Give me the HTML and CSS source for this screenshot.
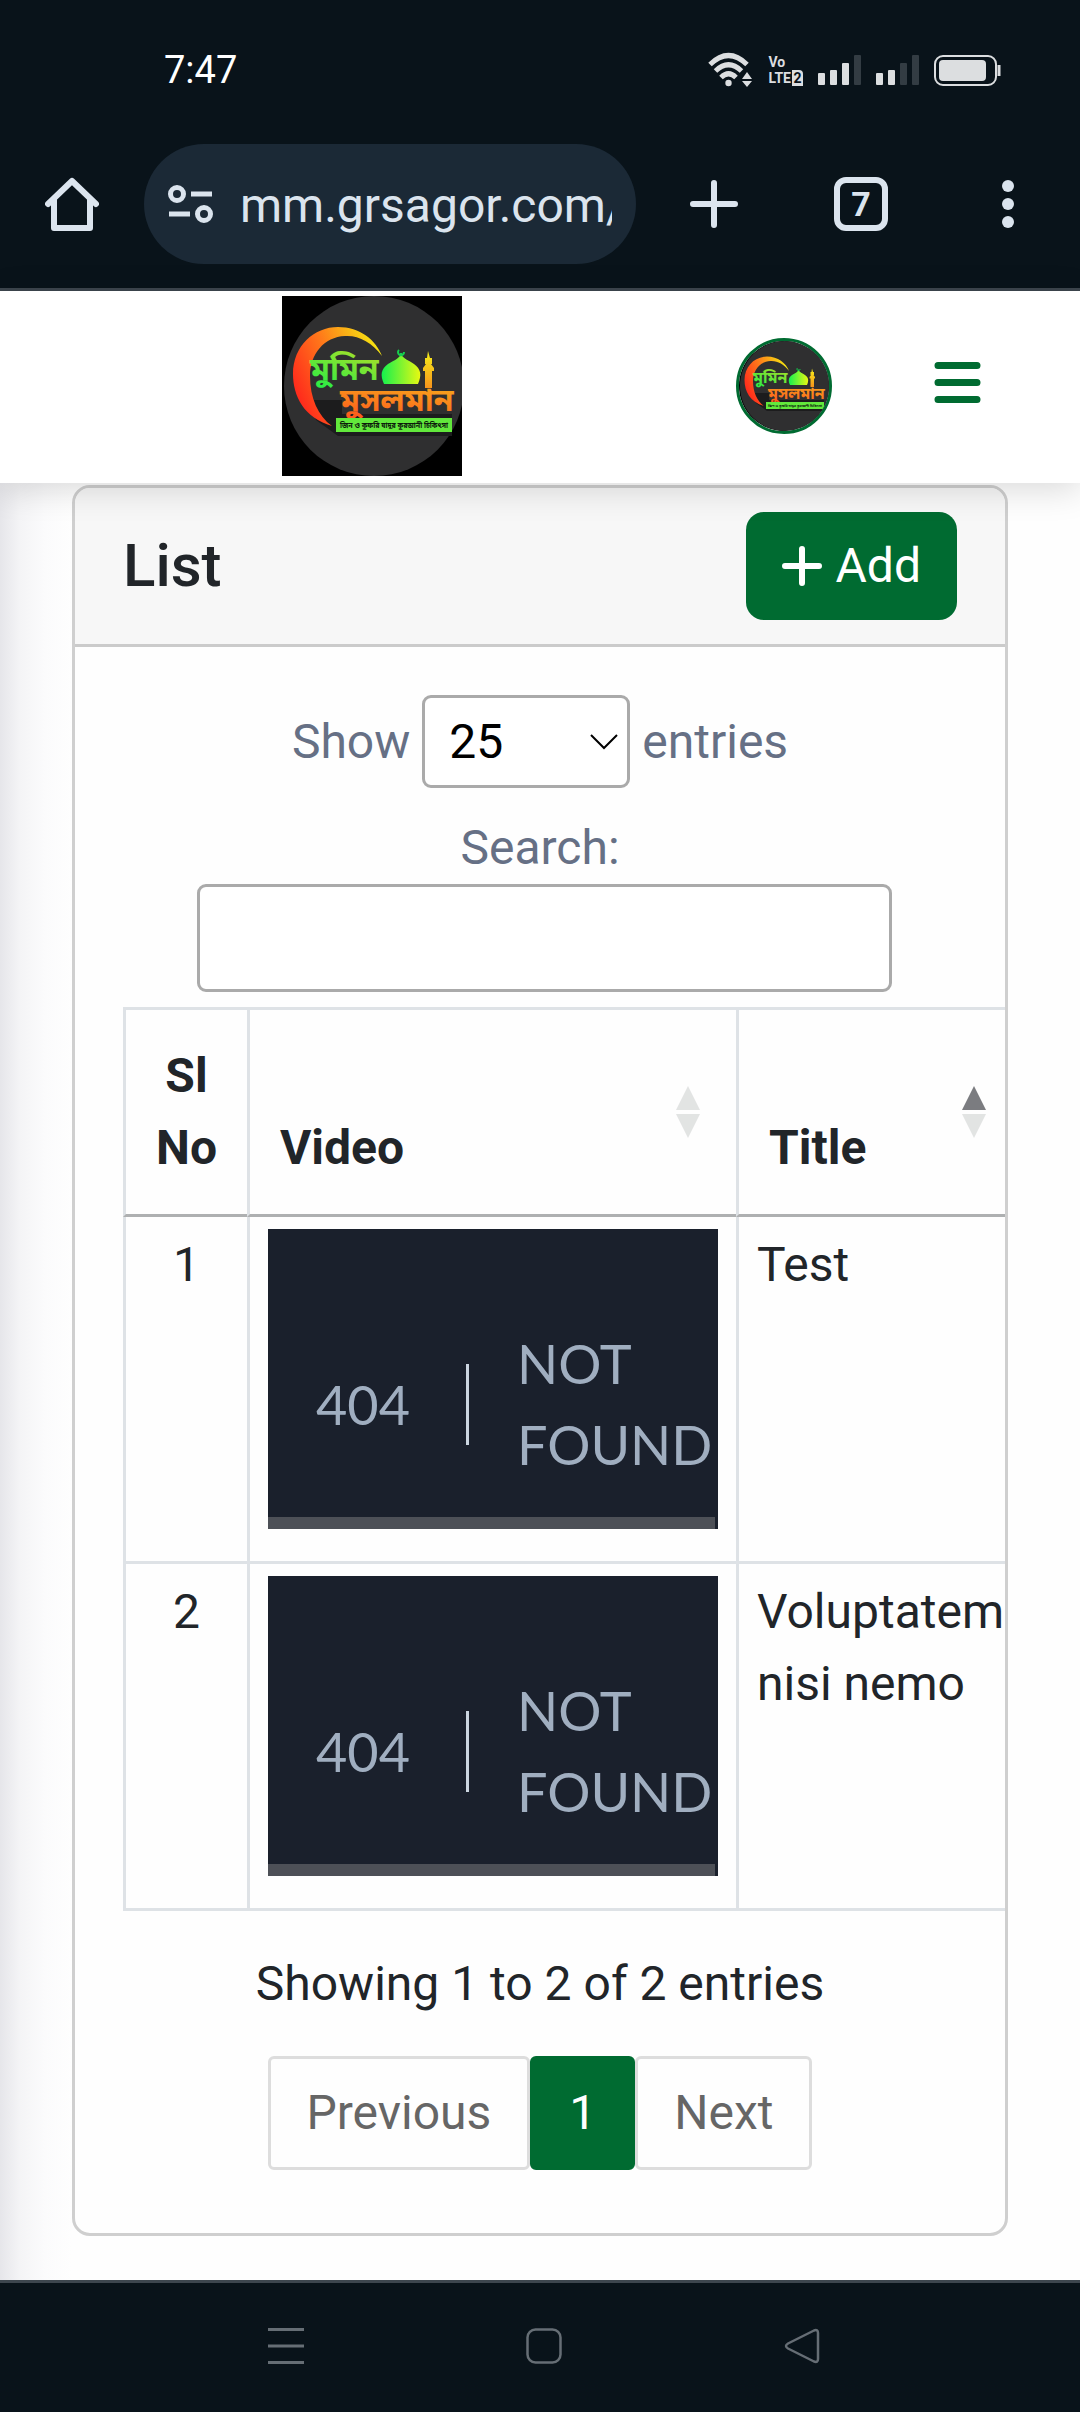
FILE: index.html
```html
<!DOCTYPE html>
<html lang="en">
<head>
<meta charset="utf-8">
<meta name="viewport" content="width=device-width, initial-scale=1">
<title>List</title>
<link rel="stylesheet" href="styles.css">
</head>
<body>
<svg class="defs" width="0" height="0" aria-hidden="true">
  <defs>
    <linearGradient id="moon" x1="0" y1="0.6" x2="1" y2="0.1"><stop offset="0" stop-color="#ff2a1c"/><stop offset="0.45" stop-color="#ff7a1a"/><stop offset="1" stop-color="#f4f410"/></linearGradient>
    <linearGradient id="leaf" x1="0" y1="1" x2="0.6" y2="0"><stop offset="0" stop-color="#12f04a"/><stop offset="1" stop-color="#9be02c"/></linearGradient>
    <linearGradient id="dome" x1="0" y1="0" x2="1" y2="0"><stop offset="0" stop-color="#14f04e"/><stop offset="1" stop-color="#e8f812"/></linearGradient>
    <linearGradient id="fire" x1="0" y1="1" x2="0.3" y2="0"><stop offset="0" stop-color="#ff4a1c"/><stop offset="1" stop-color="#f7a01c"/></linearGradient>
    <linearGradient id="tower" x1="0" y1="0" x2="0" y2="1"><stop offset="0" stop-color="#f4f01a"/><stop offset="1" stop-color="#f7941c"/></linearGradient>
    <symbol id="brand" viewBox="0 0 180 180">
      <rect width="180" height="180" fill="#000"/>
      <circle cx="92" cy="90" r="90" fill="#2f2f30"/>
      <path fill="#1c1c1d" d="M26 104h34v14h110v22H56L34 124z"/>
      <path fill="url(#moon)" d="M50 130C22 122 11 100 11 78C11 50 32 31 56 31C78 31 94 44 100 60C90 46 76 39 63 40C42 41 28 58 28 80C28 102 36 120 50 130Z"/>
      <path fill="url(#dome)" d="M102 88C98 79 99 73 106 68C112 64 117 63 119 58C121 63 127 64 132 68C139 73 140 79 136 88Z"/>
      <path fill="none" stroke="#14d04e" stroke-width="2" d="M117 54a3 3 0 1 0 5 2M119 60v-3"/>
      <path fill="url(#tower)" d="M146 55l2 7h2v6h-1l3 4v3h-2v17h-7V75h-2v-3l3-4h-1v-6h2z"/>
      <text class="logo-top" x="28" y="84" fill="url(#leaf)">মুমিন</text>
      <text class="logo-main" x="58" y="115" fill="url(#fire)">মুসলমান</text>
      <rect x="54" y="122" width="116" height="14" fill="#62e83c"/>
      <text class="logo-tag" x="112" y="132" text-anchor="middle" fill="#0c1a0c">জিন ও কুফরি যাদুর কুরআনী চিকিৎসা</text>
    </symbol>
    <symbol id="sort" viewBox="0 0 24 52">
      <path class="sort-up" d="M12 0l12 24H0z"/>
      <path class="sort-down" d="M12 52l12-24H0z"/>
    </symbol>
  </defs>
</svg>

<div class="status-bar">
  <span class="clock">7:47</span>
  <div class="status-icons">
    <svg width="45" height="36" viewBox="0 0 45 36" aria-label="Wi-Fi">
      <g fill="none" stroke="#dcdee0" stroke-width="5"><path d="M2 12.500Q20.500-5.500 39 12.500"/><path d="M7.500 19Q20.500 6.500 33.500 19"/><path d="M13 25.500Q20.500 18 28 25.500"/></g>
      <circle cx="20.500" cy="31" r="3.200" fill="#dcdee0"/>
      <path fill="#dcdee0" d="M39 20l5 7H34zM39 35l5-6H34z"/>
    </svg>
    <div class="volte">
      <span>Vo</span>
      <span class="volte-line">LTE<span class="volte-sim">2</span></span>
    </div>
    <svg width="43" height="30" viewBox="0 0 43 30" aria-label="Signal SIM 1"><g fill="#dcdee0"><rect y="18" width="7" height="12" rx="1"/><rect x="12" y="15" width="7" height="15" rx="1"/><rect x="24" y="8" width="7" height="22" rx="1"/></g><rect x="36" width="7" height="30" rx="1" fill="#333c43"/></svg>
    <svg width="43" height="30" viewBox="0 0 43 30" aria-label="Signal SIM 2"><g fill="#dcdee0"><rect y="18" width="7" height="12" rx="1"/><rect x="12" y="15" width="7" height="15" rx="1"/></g><g fill="#333c43"><rect x="24" y="8" width="7" height="22" rx="1"/><rect x="36" width="7" height="30" rx="1"/></g></svg>
    <svg width="67" height="31" viewBox="0 0 67 31" aria-label="Battery"><rect x="1" y="1" width="61" height="29" rx="8" fill="none" stroke="#dcdee0" stroke-width="2"/><rect x="5" y="5" width="47" height="21" rx="4" fill="#dcdee0"/><path d="M65 10v11" stroke="#dcdee0" stroke-width="3"/></svg>
  </div>
</div>

<div class="browser-bar">
  <button class="icon-button" type="button" aria-label="Home">
    <svg width="54" height="54" viewBox="0 0 54 54" fill="none" stroke="#dbe4ee" stroke-width="6" stroke-linejoin="round" stroke-linecap="round"><path d="M3 27L27 4l24 23"/><path d="M9 23v28h36V23"/></svg>
  </button>
  <div class="address">
    <svg width="46" height="38" viewBox="0 0 46 38" fill="none" stroke="#dbe4ee" stroke-width="5" aria-hidden="true"><circle cx="9" cy="9" r="6.500"/><path d="M23 9h21M1 29h21"/><circle cx="36" cy="29" r="6.500"/></svg>
    <input class="address-input" type="text" aria-label="Address" value="mm.grsagor.com/">
  </div>
  <div class="browser-actions">
    <button class="icon-button" type="button" aria-label="New tab">
      <svg width="54" height="54" viewBox="0 0 54 54" fill="none" stroke="#dbe4ee" stroke-width="6" stroke-linecap="round"><path d="M27 6v42M6 27h42"/></svg>
    </button>
    <button class="icon-button tab-count" type="button" aria-label="Tabs">7</button>
    <button class="icon-button" type="button" aria-label="Menu">
      <svg width="54" height="54" viewBox="0 0 54 54" fill="#dbe4ee"><circle cx="27" cy="9" r="6"/><circle cx="27" cy="27" r="6"/><circle cx="27" cy="45" r="6"/></svg>
    </button>
  </div>
</div>

<header class="site-header">
  <a class="site-logo" href="#"><svg width="180" height="180" role="img" aria-label="Logo"><use href="#brand"/></svg></a>
  <div class="site-tools">
    <a class="avatar" href="#"><svg width="90" height="90" role="img" aria-label="Profile"><use href="#brand"/></svg></a>
    <button class="menu-button" type="button" aria-label="Toggle menu">
      <svg width="47" height="41" viewBox="0 0 47 41" fill="none" stroke="#006b31" stroke-width="7" stroke-linecap="round"><path d="M4 3.500h39M4 20.500h39M4 37.500h39"/></svg>
    </button>
  </div>
</header>

<main class="page">
  <section class="card">
    <div class="card-header">
      <h1 class="card-title">List</h1>
      <button class="add-button" type="button">
        <svg width="40" height="40" viewBox="0 0 40 40" fill="none" stroke="#fff" stroke-width="6" stroke-linecap="round" aria-hidden="true"><path d="M20 3v34M3 20h34"/></svg>
        <span>Add</span>
      </button>
    </div>
    <div class="card-body">
      <div class="length-row">
        <label for="length">Show</label>
        <span class="select-wrap">
          <select id="length"><option>10</option><option selected>25</option><option>50</option><option>100</option></select>
          <svg width="28" height="16" viewBox="0 0 28 16" fill="none" stroke="#000" stroke-width="2" aria-hidden="true"><path d="M1 1l13 13L27 1"/></svg>
        </span>
        <span>entries</span>
      </div>
      <div class="search-row">
        <label for="search">Search:</label>
        <input id="search" type="search">
      </div>
      <div class="table-wrap">
        <table>
          <colgroup><col class="col-no"><col class="col-video"><col class="col-title"></colgroup>
          <thead>
            <tr>
              <th scope="col" class="number">Sl No</th>
              <th scope="col"><div class="heading"><span>Video</span><svg class="sort" width="24" height="52"><use href="#sort"/></svg></div></th>
              <th scope="col"><div class="heading"><span>Title</span><svg class="sort ascending" width="24" height="52"><use href="#sort"/></svg></div></th>
            </tr>
          </thead>
          <tbody>
            <tr>
              <td class="number">1</td>
              <td><div class="frame"><div class="frame-body"><span class="code">404</span><span class="message">Not Found</span></div><div class="frame-scroll"></div></div></td>
              <td>Test</td>
            </tr>
            <tr>
              <td class="number">2</td>
              <td><div class="frame"><div class="frame-body"><span class="code">404</span><span class="message">Not Found</span></div><div class="frame-scroll"></div></div></td>
              <td>Voluptatem nisi nemo</td>
            </tr>
          </tbody>
        </table>
      </div>
      <p class="info">Showing 1 to 2 of 2 entries</p>
      <nav class="pagination" aria-label="Pages">
        <a href="#">Previous</a><a class="current" href="#" aria-current="page">1</a><a href="#">Next</a>
      </nav>
    </div>
  </section>
</main>

<div class="system-nav">
  <button class="icon-button" type="button" aria-label="Recent apps"><svg width="36" height="36" viewBox="0 0 36 36" stroke="#666e75" stroke-width="3"><path d="M0 1.500h36M0 18h36M0 34.500h36"/></svg></button>
  <button class="icon-button" type="button" aria-label="Home screen"><svg width="36" height="36" viewBox="0 0 36 36" fill="none" stroke="#666e75" stroke-width="2.500"><rect x="1.500" y="1.500" width="33" height="33" rx="8"/></svg></button>
  <button class="icon-button" type="button" aria-label="Back"><svg width="36" height="36" viewBox="0 0 36 36" fill="none" stroke="#666e75" stroke-width="2.500" stroke-linejoin="round"><path d="M30 2.500L4 15.500Q0 18 4 20.500L30 33.500Q34 35 34 31V5Q34 1 30 2.500Z"/></svg></button>
</div>
</body>
</html>
```
FILE: styles.css
```css
* { box-sizing: border-box; }

body {
  margin: 0;
  min-height: 100vh;
  display: flex;
  flex-direction: column;
  background: #fdfdfd;
  color: #212529;
  font-family: Roboto, "Noto Sans", sans-serif;
  font-size: 48px;
  line-height: 72px;
}

button, input, select { font: inherit; color: inherit; }
button { cursor: pointer; }
a { color: inherit; text-decoration: none; }
svg { display: block; flex: none; }
.defs { position: absolute; }

.icon-button {
  display: flex;
  align-items: center;
  justify-content: center;
  padding: 0;
  border: 0;
  background: none;
}

/* Phone status bar */
.status-bar {
  height: 140px;
  padding: 0 79px 0 164px;
  display: flex;
  align-items: center;
  justify-content: space-between;
  background: #09131a;
  color: #fff;
}
.clock { font-size: 38px; }
.status-icons { display: flex; align-items: center; gap: 15px; }
.volte {
  display: flex;
  flex-direction: column;
  color: #dcdee0;
  font-size: 14px;
  font-weight: 700;
  line-height: 16px;
}
.volte-line { display: flex; gap: 1px; }
.volte-sim { width: 11px; border-radius: 0 4px 0 0; background: #dcdee0; color: #09131a; text-align: center; }

/* Browser toolbar */
.browser-bar {
  padding: 4px 45px 24px;
  display: flex;
  align-items: center;
  gap: 45px;
  background: #09131a;
  border-bottom: 3px solid #3d464e;
}
.address {
  flex: 1;
  min-width: 0;
  height: 120px;
  padding: 0 24px;
  display: flex;
  align-items: center;
  gap: 26px;
  border-radius: 60px;
  background: #1b2936;
}
.address-input {
  flex: 1;
  min-width: 0;
  padding: 4px 0 0;
  border: 0;
  background: none;
  color: #dbe4ee;
  outline: 0;
}
.browser-actions { display: flex; width: 348px; justify-content: space-between; margin-left: 6px; }
.tab-count {
  width: 54px;
  height: 54px;
  border: 6px solid #dbe4ee;
  border-radius: 12px;
  color: #dbe4ee;
  font-size: 34px;
  font-weight: 700;
  line-height: 40px;
}

/* Site header */
.site-header {
  position: relative;
  height: 192px;
  padding: 0 99px 2px 282px;
  display: flex;
  align-items: center;
  justify-content: space-between;
  background: #fff;
  box-shadow: 0 6px 32px rgba(0, 0, 0, 0.15);
}
.site-tools { display: flex; align-items: center; gap: 102px; }
.avatar { border: 3px solid #006b31; border-radius: 50%; overflow: hidden; }
.menu-button { padding: 0 0 8px; border: 0; background: none; }
.logo-top, .logo-main, .logo-tag { font-family: "Noto Sans Bengali", "Noto Sans", sans-serif; font-weight: 700; }
.logo-top, .logo-main { font-size: 32px; }
.logo-tag { font-size: 7px; }

/* Page */
.page {
  flex: 1;
  padding: 2px 72px 44px;
  background: linear-gradient(90deg, #e6e6ea 0, #f4f4f6 20px, #fbfbfc 45px, #fefefe 72px);
}
.card { border: 3px solid #cfcfcf; border-radius: 18px; background: #fefefe; overflow: hidden; }
.card-header {
  padding: 24px 48px;
  display: flex;
  align-items: center;
  justify-content: space-between;
  background: #f7f7f7;
  border-bottom: 3px solid #cbcbcb;
}
.card-title { margin: 0; font-size: 60px; font-weight: 500; }
.add-button {
  height: 108px;
  padding: 0 36px;
  display: flex;
  align-items: center;
  gap: 14px;
  border: 0;
  border-radius: 18px;
  background: #006b31;
  color: #fff;
}
.card-body { padding: 48px 48px 63px; }

/* Table controls */
.length-row, .search-row { display: flex; align-items: center; justify-content: center; color: #667085; }
.length-row { gap: 12px; }
.select-wrap { display: grid; align-items: center; }
.select-wrap > * { grid-area: 1 / 1; }
.select-wrap svg { justify-self: end; margin-right: 12px; pointer-events: none; }
select {
  appearance: none;
  width: 208px;
  height: 93px;
  padding: 0 24px;
  border: 3px solid #aaa;
  border-radius: 9px;
  background: #fff;
  color: #000;
}
.search-row { flex-direction: column; margin-top: 24px; }
#search {
  width: 695px;
  max-width: 100%;
  height: 108px;
  margin-left: 9px;
  padding: 0 24px;
  border: 3px solid #aaa;
  border-radius: 9px;
  background: #fff;
}

/* Table */
.table-wrap { margin: 15px -48px 0 0; overflow-x: auto; scrollbar-width: none; }
table { width: 899px; table-layout: fixed; border-collapse: separate; border-spacing: 0; }
.col-no { width: 124px; }
.col-video { width: 489px; }
th, td { border-left: 3px solid #dee2e6; border-bottom: 3px solid #dee2e6; text-align: left; vertical-align: top; }
th { padding: 30px 36px 30px 30px; border-top: 3px solid #dee2e6; border-bottom-color: #aeb0b1; font-weight: 700; }
td { padding: 12px 18px; }
.number, th.number { padding-left: 18px; padding-right: 18px; text-align: center; }
.heading { height: 144px; display: flex; align-items: center; justify-content: space-between; }
.heading span { align-self: flex-end; }
.sort { --up: #e2e4e3; }
.ascending { --up: #7b7c80; }
.sort-up { fill: var(--up); }
.sort-down { fill: #e2e4e3; }

/* Embedded video placeholder */
.frame {
  height: 300px;
  margin-bottom: 20px;
  display: flex;
  flex-direction: column;
  background: #1a202c;
  color: #a0aec0;
  font-family: Lato, "Noto Sans", sans-serif;
  font-size: 54px;
  line-height: 81px;
  text-transform: uppercase;
  overflow: hidden;
}
.frame-body { flex: 1; padding-top: 62px; display: flex; align-items: center; }
.frame-scroll { height: 12px; margin-right: 3px; background: #4d5057; }
.code { padding: 0 56px 0 48px; border-right: 3px solid #cbd5e0; }
.message { padding-left: 48px; }

/* Footer of the table */
.info { margin: 37px 0 36px; text-align: center; }
.pagination { display: flex; justify-content: center; }
.pagination a {
  height: 114px;
  padding: 0 36px;
  border: 3px solid #ddd;
  border-radius: 6px;
  color: #666;
  line-height: 108px;
}
.pagination .current { background: #006b31; border-color: #006b31; color: #fff; }

/* Phone navigation bar */
.system-nav {
  height: 132px;
  padding: 0 260px 4px 268px;
  display: flex;
  align-items: center;
  justify-content: space-between;
  background: #09131a;
  border-top: 3px solid #3d464e;
}
```
